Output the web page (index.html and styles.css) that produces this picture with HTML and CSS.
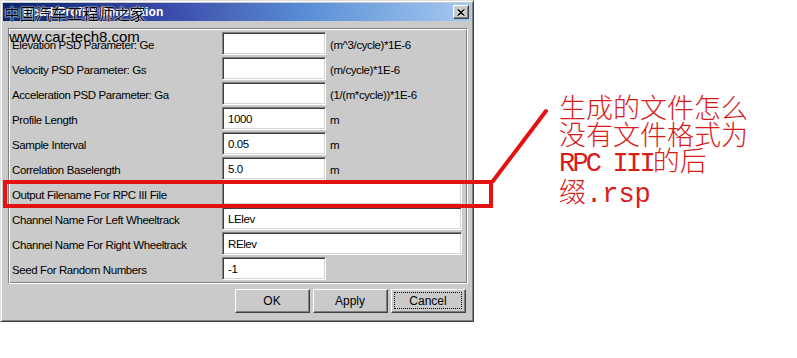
FILE: index.html
```html
<!DOCTYPE html>
<html>
<head>
<meta charset="utf-8">
<title>Road-Profile Generation</title>
<link rel="stylesheet" href="styles.css">
</head>
<body>
<div class="page">
  <div class="dialog">
    <div class="titlebar">
      <span class="title">Road-Profile Generation</span>
      <span class="close"><svg width="8" height="7" viewBox="0 0 8 7"><path d="M0.5 0.5L6.5 6.5M1.5 0.5L7.5 6.5M6.5 0.5L0.5 6.5M7.5 0.5L1.5 6.5" stroke="#000" stroke-width="1" fill="none"/></svg></span>
    </div>
    <div class="panel">
      <div class="label">Elevation PSD Parameter: Ge</div><div class="field"></div><div class="unit">(m^3/cycle)*1E-6</div>
      <div class="label">Velocity PSD Parameter: Gs</div><div class="field"></div><div class="unit">(m/cycle)*1E-6</div>
      <div class="label">Acceleration PSD Parameter: Ga</div><div class="field"></div><div class="unit">(1/(m*cycle))*1E-6</div>
      <div class="label">Profile Length</div><div class="field">1000</div><div class="unit">m</div>
      <div class="label">Sample Interval</div><div class="field">0.05</div><div class="unit">m</div>
      <div class="label">Correlation Baselength</div><div class="field">5.0</div><div class="unit">m</div>
      <div class="label">Output Filename For RPC III File</div><div class="field wide"></div>
      <div class="label">Channel Name For Left Wheeltrack</div><div class="field wide">LElev</div>
      <div class="label">Channel Name For Right Wheeltrack</div><div class="field wide">RElev</div>
      <div class="label">Seed For Random Numbers</div><div class="field">-1</div><div class="unit"></div>
    </div>
    <div class="buttons">
      <div class="btn"><span>OK</span></div>
      <div class="btn"><span>Apply</span></div>
      <div class="btn focused"><span>Cancel</span></div>
    </div>
  </div>

  <div class="watermark">
    <div class="wm-cn">中国汽车工程师之家</div>
    <div class="wm-url">www.car-tech8.com</div>
  </div>

  <svg class="annot" width="797" height="358" viewBox="0 0 797 358">
    <rect x="5" y="182" width="486" height="24" fill="none" stroke="#e41212" stroke-width="4"/>
    <line x1="493" y1="181" x2="546" y2="111" stroke="#e41212" stroke-width="4" stroke-linecap="round"/>
  </svg>

  <div class="note">
    <div>生成的文件怎么</div>
    <div>没有文件格式为</div>
    <div><span class="lat tight">RPC III</span>的后</div>
    <div>缀<span class="lat">.rsp</span></div>
  </div>
</div>
</body>
</html>
```
FILE: styles.css
```css
* { box-sizing: border-box; }
html, body { margin: 0; padding: 0; background: #fff; }
body { font-family: "Liberation Sans", Arial, sans-serif; color: #000; }

.page { position: relative; width: 797px; height: 358px; overflow: hidden; }

.dialog {
  width: 474px; height: 322px;
  background: #cacaca;
  border: 1px solid;
  border-color: #dedede #404040 #404040 #dedede;
  box-shadow: inset 1px 1px #fff, inset -1px -1px #808080;
  padding: 2px;
  display: flex; flex-direction: column;
}

.titlebar {
  height: 18px; flex: none;
  background: linear-gradient(to right, #0a246a 0%, #3a4aa8 35%, #5a8ed6 65%, #a6caf0 100%);
  display: flex; align-items: center; justify-content: space-between;
  padding: 0 2px 0 20px;
}
.title { color: #fff; font-weight: bold; font-size: 12px; letter-spacing: 0.1px; }
.close {
  width: 16px; height: 14px;
  background: #cacaca;
  border: 1px solid; border-color: #fff #404040 #404040 #fff;
  box-shadow: inset -1px -1px #808080;
  display: flex; align-items: center; justify-content: center;
}
.close svg { display: block; }

.panel {
  margin: 7px 3px 0 5px;
  border: 1px solid; border-color: #808080 #fff #fff #808080;
  box-shadow: inset 1px 1px #fff, inset -1px -1px #808080;
  padding: 3px 0 3px 0;
  display: grid;
  grid-template-columns: 213px 104px 1fr;
  grid-auto-rows: 23px;
  row-gap: 2px;
  font-size: 11.5px;
  letter-spacing: -0.4px;
}
.label { display: flex; align-items: center; padding: 2px 0 0 3px; white-space: nowrap; }
.unit { display: flex; align-items: center; padding: 2px 0 0 4px; white-space: nowrap; }
.field {
  background: #fff;
  border: 1px solid; border-color: #808080 #fff #fff #808080;
  box-shadow: inset 1px 1px #404040, inset -1px -1px #d4d4d4;
  padding: 1px 0 0 5px;
  display: flex; align-items: center;
}
.field.wide { grid-column: span 2; margin-right: 5px; }

.buttons {
  margin-top: 5px;
  display: flex; justify-content: flex-end; gap: 3px;
  padding-right: 5px;
}
.btn {
  width: 75px; height: 24px;
  background: #cacaca;
  border: 1px solid; border-color: #fff #404040 #404040 #fff;
  box-shadow: inset -1px -1px #808080;
  padding: 2px 3px 3px 2px;
  display: flex;
  font-size: 12px;
}
.btn span { flex: 1; display: flex; align-items: center; justify-content: center; border: 1px solid transparent; }
.btn.focused span { border: 1px dotted #000; }

.watermark { position: absolute; left: 4px; top: 3px; color: #000; }
.wm-cn {
  font-family: "Noto Sans CJK SC", sans-serif; font-size: 16px; line-height: 20px;
  letter-spacing: -0.3px;
  text-shadow: 0 0 1px #fff, 0 0 1px #fff, 0 0 2px rgba(255,255,255,0.8);
}
.wm-url { font-family: "Liberation Sans", Arial, sans-serif; font-size: 15px; line-height: 18px; margin: 5px 0 0 5px; }

.annot { position: absolute; left: 0; top: 0; pointer-events: none; }

.note {
  position: absolute; left: 559px; top: 94px;
  color: #d81c1c;
  font-family: "Noto Sans CJK SC", sans-serif;
  font-weight: 300;
  font-size: 27px; line-height: 26.7px;
}
.note .lat { font-family: "Liberation Mono", monospace; font-weight: 400; }
.note .lat.tight { letter-spacing: -2.8px; }
```
